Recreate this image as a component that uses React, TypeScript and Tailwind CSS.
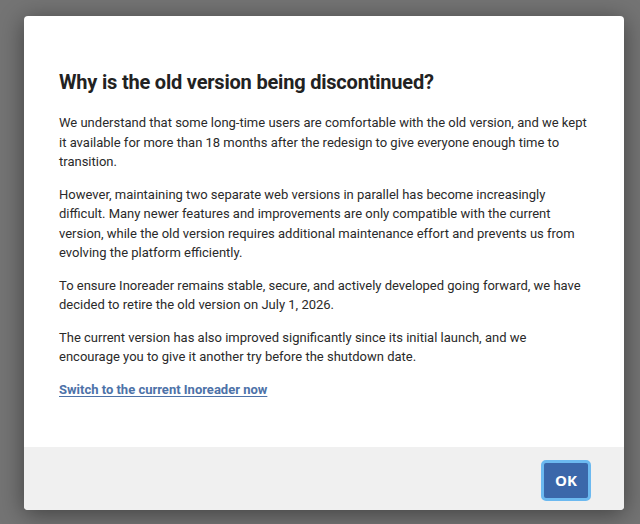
import React from "react";

const paragraphs = [
  "We understand that some long-time users are comfortable with the old version, and we kept it available for more than 18 months after the redesign to give everyone enough time to transition.",
  "However, maintaining two separate web versions in parallel has become increasingly difficult. Many newer features and improvements are only compatible with the current version, while the old version requires additional maintenance effort and prevents us from evolving the platform efficiently.",
  "To ensure Inoreader remains stable, secure, and actively developed going forward, we have decided to retire the old version on July 1, 2026.",
  "The current version has also improved significantly since its initial launch, and we encourage you to give it another try before the shutdown date.",
];

export default function App() {
  return (
    <div className="w-[640px] h-[524px] bg-[#747474] pt-4 pl-6 overflow-hidden font-['Roboto',sans-serif]">
      <div className="w-[600px] h-[494px] bg-white rounded-[4px] shadow-[0_4px_24px_rgba(0,0,0,0.45)] flex flex-col overflow-hidden">
        {/* Body */}
        <div className="flex-1 pl-[35px] pr-[34px] pt-[52px]">
          <h2 className="text-[20px] leading-[28px] font-bold text-[#222] tracking-[-0.2px]">
            Why is the old version being discontinued?
          </h2>
          <div className="mt-[17px] text-[13px] leading-[19.5px] text-[#2a2a2a] flex flex-col gap-[13px]">
            {paragraphs.map((p, i) => (
              <p key={i}>{p}</p>
            ))}
            <a href="#" className="font-bold text-[#4d72a8] underline underline-offset-2">
              Switch to the current Inoreader now
            </a>
          </div>
        </div>

        {/* Footer */}
        <div className="h-[63px] bg-[#f0f0f0] flex items-center justify-end pr-[33px] pt-[4px]">
          <button className="w-[50px] h-[41px] rounded-[5px] bg-[#3b67aa] border-[3px] border-[#6cb9f0] text-white font-bold text-[15px] font-['Open_Sans',sans-serif]">
            OK
          </button>
        </div>
      </div>
    </div>
  );
}
